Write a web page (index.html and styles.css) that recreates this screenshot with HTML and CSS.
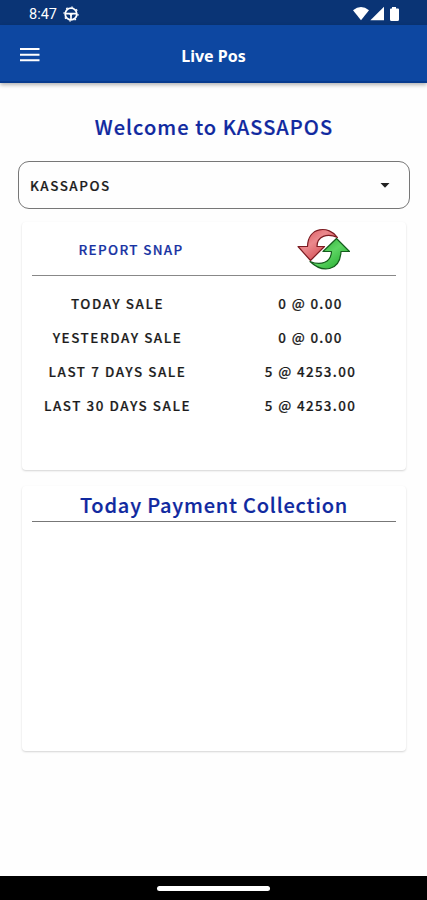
FILE: index.html
```
<!DOCTYPE html>
<html lang="en">
<head>
<meta charset="utf-8">
<title>Live Pos</title>
<link rel="stylesheet" href="styles.css">
</head>
<body>
<div class="app">
  <div class="status">
    <span class="time">8:47</span>
    <svg class="wheel" viewBox="0 0 16 16" width="16" height="16" fill="none" stroke="#fff">
      <circle cx="8" cy="8" r="5.8" stroke-width="1.8"/>
      <circle cx="8" cy="8" r="7" stroke-width="1.2" stroke-dasharray="1.8 3.7"/>
      <path d="M2.5 7.6h11M8 8v5.5" stroke-width="1.7"/>
      <path d="M5.8 7.5h4.4L8 10.4z" fill="#fff" stroke="none"/>
    </svg>
    <svg class="signals" viewBox="0 0 50 16" width="50" height="16" fill="#fff">
      <path d="M1 4.2Q9 -2.2 17 4.2L9 14.3z"/>
      <path d="M18.4 14.2L32 .8V14.2z"/>
      <path d="M40 1h4v1.4h2q1 0 1 1V13.500q0 1.500-1.500 1.500h-6q-1.500 0-1.500-1.500V3.400q0-1 1-1h1z"/>
    </svg>
  </div>
  <header class="bar">
    <svg class="menu" viewBox="0 0 20 14" width="20" height="14" fill="#fff"><path d="M0 0h19.5v2H0zM0 5.700h19.500v2H0zM0 11.300h19.500v2H0z"/></svg>
    <h1 class="title">Live Pos</h1>
  </header>
  <main class="content">
    <h2 class="heading welcome">Welcome to KASSAPOS</h2>
    <div class="select">
      <span>KASSAPOS</span>
      <svg viewBox="0 0 10 5" width="10" height="5" fill="#222"><path d="M.5 0h9L5 4.800z"/></svg>
    </div>
    <section class="card report">
      <div class="row head">
        <span class="snap">REPORT SNAP</span>
        <span class="refresh">
          <svg viewBox="0 0 54 44" width="54" height="44">
            <defs>
              <linearGradient id="red" x1="0" y1="0" x2="1" y2="1"><stop offset="0" stop-color="#d9474e"/><stop offset=".4" stop-color="#ea898d"/><stop offset="1" stop-color="#c8242d"/></linearGradient>
              <linearGradient id="green" x1="0" y1="0" x2="1" y2="1"><stop offset="0" stop-color="#1d9f29"/><stop offset=".5" stop-color="#5dd563"/><stop offset="1" stop-color="#17a323"/></linearGradient>
            </defs>
            <path d="M40.500 10.500C32 -2 11 -.5 10.500 19.500H1L13.500 33.500L27.500 19.500H20C20 9.500 30 5.500 40.500 10.500z" fill="url(#red)" stroke="#7c1c22" stroke-width="1.2" stroke-linejoin="round"/>
            <path d="M13 34.500C25 46 43 45 44 24.500H52.500L39.500 11.500L26 24.500H34.500C34 35.500 24 39 13 34.500z" fill="url(#green)" stroke="#145c1c" stroke-width="1.2" stroke-linejoin="round"/>
          </svg>
        </span>
      </div>
      <div class="row"><span>TODAY SALE</span><span class="value">0 @ 0.00</span></div>
      <div class="row"><span>YESTERDAY SALE</span><span class="value">0 @ 0.00</span></div>
      <div class="row"><span>LAST 7 DAYS SALE</span><span class="value">5 @ 4253.00</span></div>
      <div class="row"><span>LAST 30 DAYS SALE</span><span class="value">5 @ 4253.00</span></div>
    </section>
    <section class="card payment">
      <h2 class="heading collection">Today Payment Collection</h2>
    </section>
  </main>
  <footer class="nav"><div class="pill"></div></footer>
</div>
</body>
</html>
```
FILE: styles.css
```
* { box-sizing: border-box; }
body { margin: 0; background: #fefefe; color: #1c1c1c; font-family: "Noto Sans CJK JP", "Noto Sans", sans-serif; font-weight: 500; }
.app { height: 900px; display: flex; flex-direction: column; overflow: hidden; }
.status { height: 25px; flex: none; background: #0a3475; color: #fff; display: flex; align-items: center; padding: 3px 25px 0 29px; }
.time { font: 400 14.5px Roboto, sans-serif; }
.wheel { margin-left: 6px; }
.signals { margin-left: auto; }
.bar { height: 58px; flex: none; background: #0d47a1; border-bottom: 2px solid #073a8e; box-shadow: 0 2px 4px rgba(0,0,0,.3); color: #fff; display: grid; grid-template-columns: 1fr auto 1fr; align-items: center; padding: 4px 20px 0; }
.title { margin: 0; font: 700 16px/24px "Noto Sans", sans-serif; padding-top: 1px; }
.content { flex: 1; padding: 25px 17px 0 18px; }
.heading { margin: 0; text-align: center; color: #1029a0; font-size: 20px; line-height: 37px; font-weight: 500; -webkit-text-stroke: .2px; }
.welcome { letter-spacing: 1.05px; height: 36px; }
.select { height: 48px; margin-top: 17px; border: 1px solid #777; border-radius: 11px; padding: 0 19px 0 11px; display: flex; align-items: center; justify-content: space-between; font-size: 13.4px; line-height: 20px; letter-spacing: 1.55px; -webkit-text-stroke: .2px; }
.card { margin: 0 4px; padding: 0 10px; border-radius: 4px; background: #fff; box-shadow: 0 1px 2px rgba(0,0,0,.17); }
.report { height: 248px; margin-top: 13px; }
.row { display: grid; grid-template-columns: 171px 1fr; height: 34.1px; align-items: center; text-align: center; font-size: 13.4px; letter-spacing: 1.55px; -webkit-text-stroke: .2px; }
.row.head { grid-template-columns: 198px 1fr; height: 54px; border-bottom: 1px solid #888; margin-bottom: 10px; }
.value { padding-left: 22px; letter-spacing: 1.35px; }
.snap { color: #1733a3; letter-spacing: 1.35px; }
.refresh { height: 44px; text-align: left; padding-left: 67px; }
.refresh svg { display: block; }
.payment { height: 265px; margin-top: 16px; }
.collection { height: 36px; border-bottom: 1px solid #777; letter-spacing: .8px; }
.nav { height: 24px; flex: none; background: #000; display: flex; align-items: center; justify-content: center; }
.pill { width: 113px; height: 5px; border-radius: 3px; background: #fff; }
```
